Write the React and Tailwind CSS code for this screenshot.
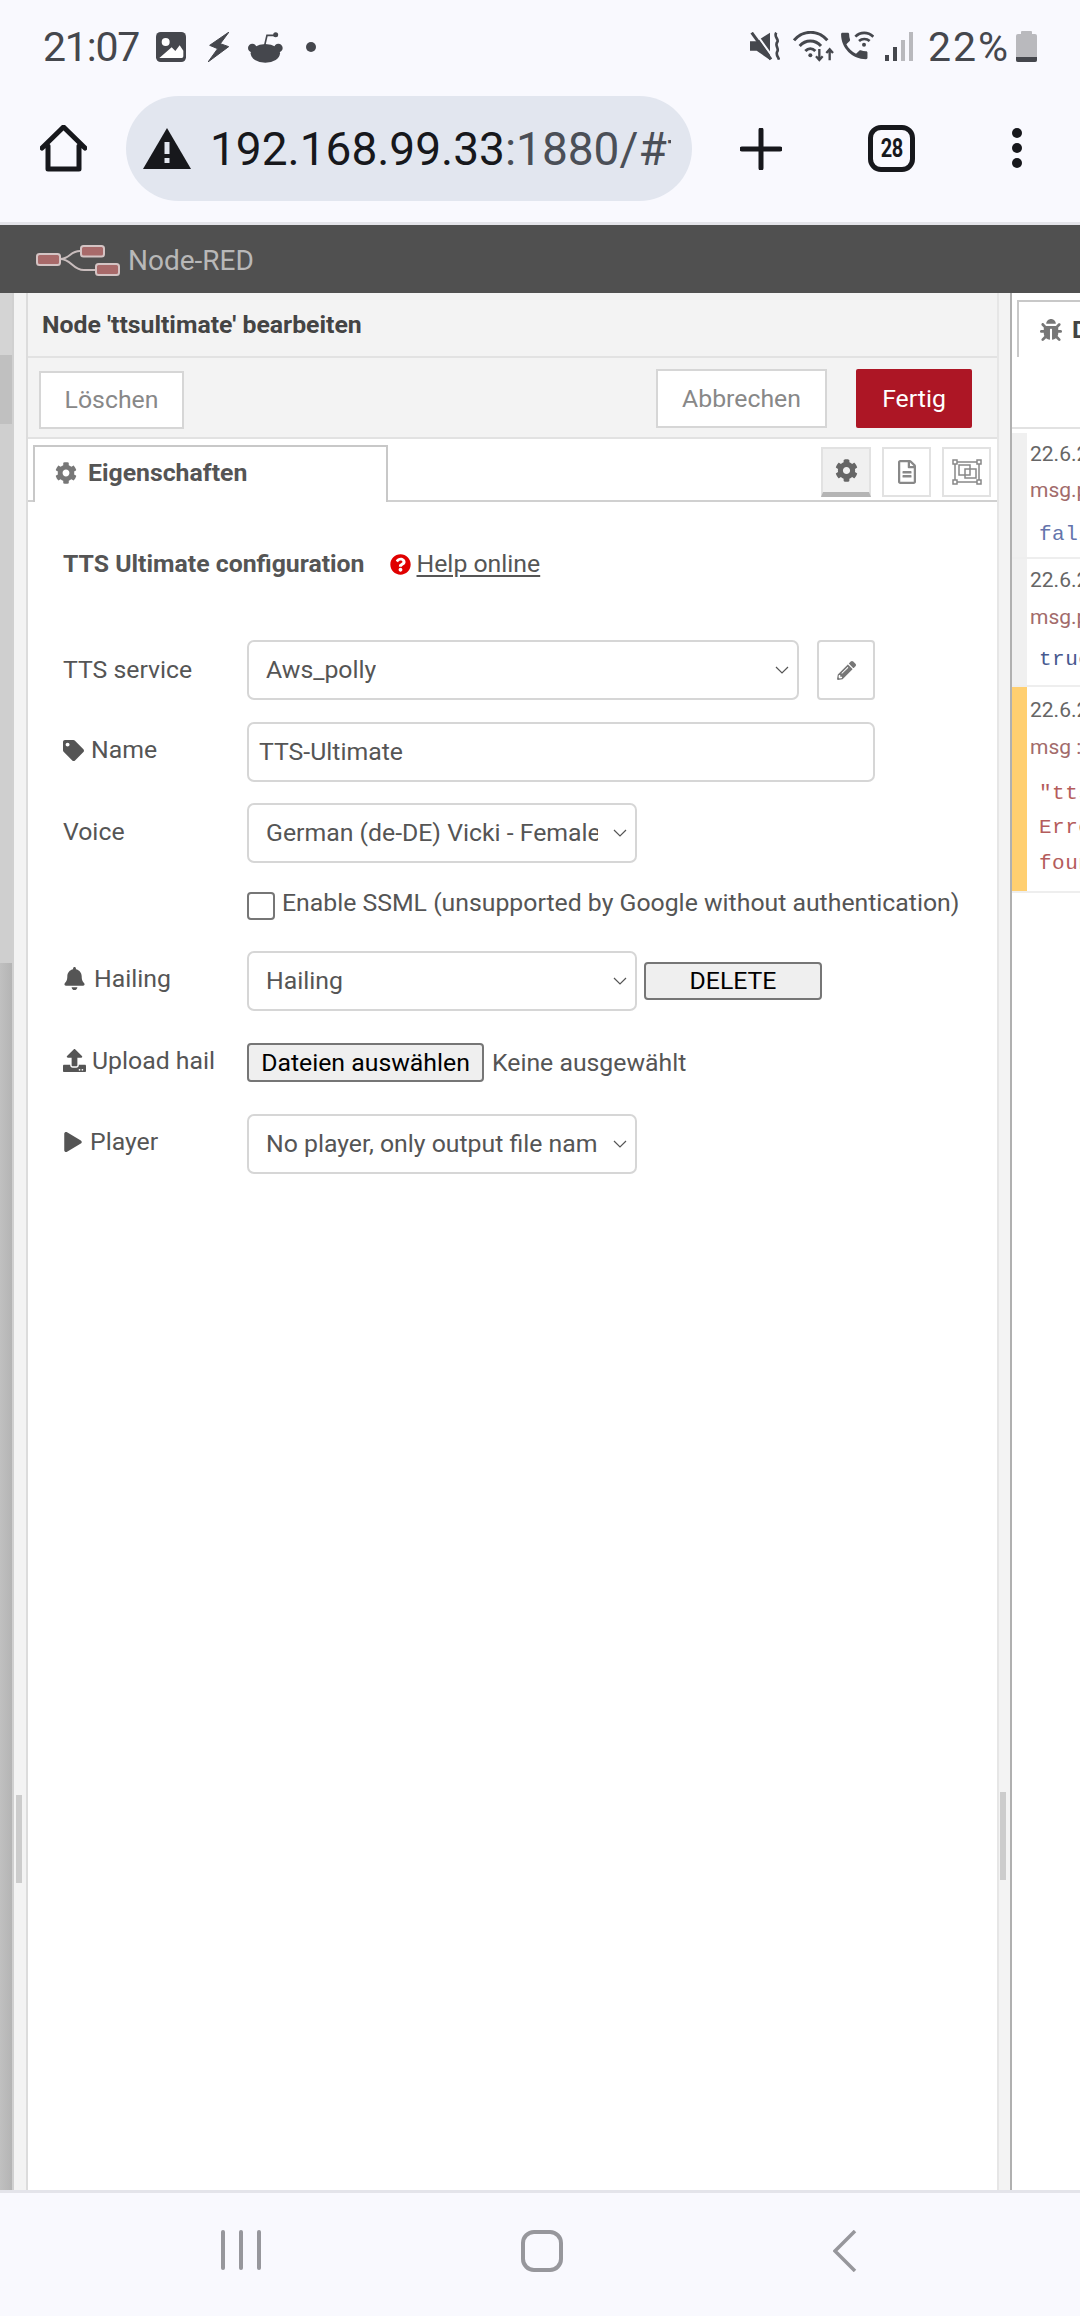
import React from 'react'
import { FaCog, FaTag, FaBell, FaUpload, FaPlay, FaQuestionCircle, FaPencilAlt, FaBug, FaRegFileAlt } from 'react-icons/fa'

function StatusBar() {
  return (
    <div className="flex h-[96px] items-start pl-[43px] pr-[43px] pt-[31px] text-[#45474d]">
      <span className="h-[32px] w-[98px] whitespace-nowrap text-[41px] leading-[32px] tracking-[-1.2px]">21:07</span>
      <svg className="ml-[15px] mt-[1px]" width="30" height="30" viewBox="18 22 90 90">
        <rect x="18" y="22" width="90" height="90" rx="14" fill="#45474d" />
        <circle cx="47" cy="52" r="12" fill="#fff" />
        <path d="M28 100 65 68l11 11 13-17 11 16v17q0 5-5 5H33q-5 0-5-0z" fill="#fff" />
      </svg>
      <svg className="ml-[22px] mt-[1px]" width="21" height="30" viewBox="175 22 63 90">
        <path d="M238 22 180 62l24 10-29 40 62-46-25-9z" fill="#45474d" stroke="#45474d" strokeWidth="3" />
      </svg>
      <svg className="ml-[19px] mt-[1px]" width="35" height="31" viewBox="295 20 105 93">
        <path d="M345 60 352 30h26" fill="none" stroke="#45474d" strokeWidth="5" />
        <circle cx="378" cy="28" r="7.500" fill="#45474d" />
        <circle cx="308" cy="68" r="13" fill="#45474d" />
        <circle cx="386" cy="68" r="13" fill="#45474d" />
        <ellipse cx="347" cy="84" rx="44" ry="28" fill="#45474d" />
      </svg>
      <span className="ml-[23px] mt-[11px] h-[10px] w-[10px] rounded-full bg-[#45474d]" />
      <div className="ml-auto flex items-start">
        <svg className="mt-[1px]" width="30" height="30" viewBox="15 20 90 90">
          <path d="M15 48H35L75 22V104L35 76H15z" fill="#45474d" />
          <path d="M28 18 84 96" stroke="#f9f9fe" strokeWidth="6" />
          <path d="M20 22 78 102" stroke="#45474d" strokeWidth="9" />
          <path d="M94 22c-9 12 9 20 3 28-9 10 6 20 0 28-6 10 3 17 5 25" fill="none" stroke="#45474d" strokeWidth="8" />
        </svg>
        <svg className="ml-[13px]" width="42" height="31" viewBox="145 18 126 93">
          <g fill="none" stroke="#45474d" strokeWidth="9">
            <path d="M148 46c28-32 72-32 100 0" />
            <path d="M165 63c18-20 46-20 64 0" />
            <path d="M182 78c9-9 21-9 30 0" />
            <path d="M224 72v34M214 94l10 11 10-11" strokeWidth="7" />
            <path d="M255 106V72M245 84l10-11 10 11" strokeWidth="7" />
          </g>
          <circle cx="197" cy="91" r="6" fill="#45474d" />
        </svg>
        <svg className="ml-[6px]" width="33" height="30" viewBox="288 20 99 90">
          <path transform="translate(275 12) scale(4.400)" d="M6.600 10.800c1.400 2.800 3.800 5.100 6.600 6.600l2.200-2.200c.3-.3.700-.4 1-.2 1.100.4 2.300.600 3.600.600.600 0 1 .4 1 1V20c0 .600-.4 1-1 1-9.400 0-17-7.600-17-17 0-.600.4-1 1-1h3.500c.600 0 1 .4 1 1 0 1.300.2 2.500.600 3.600.1.300 0 .7-.2 1z" fill="#45474d" />
          <g fill="none" stroke="#45474d" strokeWidth="8">
            <path d="M331 37c15-15 38-15 54 0" />
            <path d="M342 50c9-8 23-8 32 0" />
          </g>
          <circle cx="357" cy="61" r="6" fill="#45474d" />
        </svg>
        <div className="ml-[11px] flex h-[30px] w-[28px] items-end gap-[4px]">
          <span className="h-[6px] w-[4px] bg-[#45474d]" />
          <span className="h-[14px] w-[4px] bg-[#45474d]" />
          <span className="h-[21px] w-[4px] bg-[#b9b9bd]" />
          <span className="h-[29px] w-[4px] bg-[#b9b9bd]" />
        </div>
        <span className="ml-[15px] h-[32px] w-[83px] whitespace-nowrap text-[41px] leading-[32px] tracking-[2px]">22%</span>
        <div className="ml-[5px] flex h-[31px] w-[21px] flex-col items-center">
          <span className="h-[3px] w-[11px] rounded-t-[1px] bg-[#b9b9bd]" />
          <span className="flex h-[28px] w-[21px] flex-col justify-end rounded-[2px] bg-[#b9b9bd]">
            <span className="h-[5px] rounded-b-[2px] bg-[#45474d]" />
          </span>
        </div>
      </div>
    </div>
  )
}

function BrowserBar() {
  return (
    <div className="flex h-[126px] items-start">
      <svg className="ml-[40px] mt-[29px]" width="47" height="47" viewBox="0 0 47 47">
        <path d="M2 23 23.500 2 45 23M8 21v23h31V21" fill="none" stroke="#17181c" strokeWidth="5" strokeLinejoin="round" strokeLinecap="round" />
      </svg>
      <div className="ml-[39px] flex h-[105px] w-[566px] items-center rounded-full bg-[#e2e6ef] pl-[17px]">
        <svg width="48" height="41" viewBox="0 0 48 41">
          <path d="M24 0 48 41H0z" fill="#17181c" />
          <rect x="21.500" y="14" width="5" height="12" fill="#e2e6ef" />
          <rect x="21.500" y="30" width="5" height="5" fill="#e2e6ef" />
        </svg>
        <div className="ml-[19px] w-[461px] overflow-hidden whitespace-nowrap text-[46px] leading-[54px] text-[#4b4f57]">
          <span className="text-[#17181c]">192.168.99.33</span>:1880/#flow/8f2a
        </div>
      </div>
      <svg className="ml-[48px] mt-[32px]" width="42" height="42" viewBox="0 0 42 42">
        <path d="M21 2v38M2 21h38" stroke="#17181c" strokeWidth="5" strokeLinecap="round" />
      </svg>
      <div className="ml-[86px] mt-[29px] flex h-[47px] w-[47px] items-center justify-center rounded-[13px] border-[5px] border-[#17181c] text-[25px] font-bold tracking-[-0.5px] text-[#17181c]">
        <span className="scale-x-[0.8]">28</span>
      </div>
      <div className="ml-[97px] mt-[32px] flex flex-col gap-[5px]">
        <span className="h-[10px] w-[10px] rounded-full bg-[#17181c]" />
        <span className="h-[10px] w-[10px] rounded-full bg-[#17181c]" />
        <span className="h-[10px] w-[10px] rounded-full bg-[#17181c]" />
      </div>
    </div>
  )
}

function NodeRedHeader() {
  return (
    <div className="flex h-[68px] items-center bg-[#505050] pl-[36px]">
      <svg className="mt-[3px]" width="84" height="32" viewBox="0 0 84 32">
        <path d="M24 14C34 14 34 6 44 6M24 14C36 14 36 25 48 25H59" fill="none" stroke="#c9bdbd" strokeWidth="2" />
        <rect x="1" y="9" width="23" height="11" rx="2.500" fill="#a86a6a" stroke="#d4c4c4" strokeWidth="2" />
        <rect x="45" y="1" width="23" height="10.500" rx="2.500" fill="#a86a6a" stroke="#d4c4c4" strokeWidth="2" />
        <rect x="60" y="19" width="23" height="11" rx="2.500" fill="#a86a6a" stroke="#d4c4c4" strokeWidth="2" />
      </svg>
      <span className="ml-[8px] mt-[3px] text-[28px] leading-none text-[#b8b8b8]">Node-RED</span>
    </div>
  )
}

function SelectBox({ width, text, textWidth }) {
  return (
    <div className={`flex h-[60px] items-center rounded-[7px] border-2 border-[#d6d6d6] bg-white pl-[17px] text-[24.800px] text-[#555] ${width}`}>
      <span className={`overflow-hidden whitespace-nowrap ${textWidth}`}>{text}</span>
      <svg className="ml-auto mr-[8px]" width="14" height="8" viewBox="0 0 14 8">
        <path d="M1 1l6 6 6-6" fill="none" stroke="#555" strokeWidth="1.200" />
      </svg>
    </div>
  )
}

function Label({ icon, children, lift }) {
  return (
    <div className={`flex w-[184px] items-center text-[24.800px] leading-[30px] text-[#555] ${lift}`}>
      {icon}
      {children}
    </div>
  )
}

function EditForm() {
  return (
    <div className="flex-1 bg-white pl-[35px]">
      <div className="mt-[47px] flex h-[30px] items-center text-[24.800px] text-[#555]">
        <span className="font-bold">TTS Ultimate configuration</span>
        <FaQuestionCircle className="ml-[25px] text-[#e00000]" size={21} />
        <span className="ml-[6px] underline underline-offset-[3px]">Help online</span>
      </div>

      <div className="mt-[61px] flex items-center">
        <Label>TTS service</Label>
        <SelectBox width="w-[552px]" text="Aws_polly" />
        <div className="ml-[18px] flex h-[60px] w-[58px] items-center justify-center rounded-[4px] border-2 border-[#d6d6d6] bg-white text-[#777]">
          <FaPencilAlt size={19} />
        </div>
      </div>

      <div className="mt-[22px] flex items-center">
        <Label lift="-mt-[4px]" icon={<FaTag className="mr-[7px] text-[#555]" size={21} />}>Name</Label>
        <div className="flex h-[60px] w-[628px] items-center rounded-[7px] border-2 border-[#d6d6d6] bg-white pl-[10px] text-[24.800px] text-[#555]">TTS-Ultimate</div>
      </div>

      <div className="mt-[21px] flex items-center">
        <Label lift="-mt-[3px]">Voice</Label>
        <SelectBox width="w-[390px]" text="German (de-DE) Vicki - Female" textWidth="w-[332px]" />
      </div>

      <div className="ml-[184px] mt-[29px] flex h-[28px] items-center">
        <span className="h-[28px] w-[28px] rounded-[4px] border-2 border-[#767676] bg-white" />
        <span className="-mt-[6px] ml-[7px] whitespace-nowrap text-[24.800px] text-[#555]">Enable SSML (unsupported by Google without authentication)</span>
      </div>

      <div className="mt-[31px] flex items-center">
        <Label lift="-mt-[5px]" icon={<FaBell className="mr-[8px] text-[#555]" size={23} />}>Hailing</Label>
        <SelectBox width="w-[390px]" text="Hailing" />
        <div className="ml-[7px] flex h-[38px] w-[178px] items-center justify-center rounded-[4px] border-2 border-[#767676] bg-[#efefef] text-[24.800px] text-black">DELETE</div>
      </div>

      <div className="mt-[32px] flex items-center">
        <Label lift="-mt-[4px]" icon={<FaUpload className="mr-[6px] text-[#555]" size={23} />}>Upload hail</Label>
        <div className="flex h-[39px] w-[237px] items-center justify-center rounded-[4px] border-2 border-[#767676] bg-[#efefef] text-[24.800px] text-black">Dateien auswählen</div>
        <span className="ml-[8px] text-[24.800px] text-[#555]">Keine ausgewählt</span>
      </div>

      <div className="mt-[32px] flex items-center">
        <Label lift="-mt-[4px]" icon={<FaPlay className="mr-[7px] text-[#555]" size={20} />}>Player</Label>
        <SelectBox width="w-[390px]" text="No player, only output file name" textWidth="w-[332px]" />
      </div>
    </div>
  )
}

function Tray() {
  return (
    <div className="flex flex-1 flex-col border-l-2 border-[#dcdcdc]">
      <div className="flex h-[65px] items-center border-b-2 border-[#e2e2e2] bg-[#f3f3f3] pl-[14px] text-[24.800px] font-bold text-[#444]">Node 'ttsultimate' bearbeiten</div>
      <div className="flex h-[81px] items-start border-b-2 border-[#e2e2e2] bg-[#f3f3f3] pl-[11px] pr-[25px] pt-[11px] text-[24.800px]">
        <div className="mt-[2px] flex h-[58px] w-[145px] items-center justify-center border-2 border-[#d6d6d6] bg-white text-[#888]">Löschen</div>
        <div className="ml-auto flex h-[59px] w-[171px] items-center justify-center border-2 border-[#d6d6d6] bg-white text-[#888]">Abbrechen</div>
        <div className="ml-[29px] flex h-[59px] w-[116px] items-center justify-center rounded-[2px] bg-[#ad1625] text-white">Fertig</div>
      </div>
      <div className="flex h-[63px] items-start border-b-2 border-[#d0d0d0] bg-white pl-[5px]">
        <div className="mt-[6px] flex h-[57px] w-[355px] items-center border-x-2 border-t-2 border-[#c8c8c8] bg-white pb-[3px] pl-[20px] text-[24.800px] font-bold text-[#555]">
          <FaCog className="text-[#777]" size={22} />
          <span className="ml-[11px]">Eigenschaften</span>
        </div>
        <div className="ml-auto mr-[6px] mt-[8px] flex gap-[11px]">
          <div className="flex h-[50px] w-[50px] flex-col items-center justify-center border-2 border-b-[5px] border-[#e2e2e2] border-b-[#b4b4b4] bg-[#f0f0f0] text-[#666]">
            <FaCog size={23} />
          </div>
          <div className="flex h-[50px] w-[49px] items-center justify-center border-2 border-[#e2e2e2] bg-white text-[#888]">
            <FaRegFileAlt size={24} />
          </div>
          <div className="flex h-[50px] w-[49px] items-center justify-center border-2 border-[#e2e2e2] bg-white">
            <svg width="30" height="26" viewBox="0 0 30 26" fill="none" stroke="#888" strokeWidth="1.500">
              <rect x="3" y="3" width="24" height="20" />
              <rect x="1" y="1" width="4" height="4" fill="#fff" />
              <rect x="25" y="1" width="4" height="4" fill="#fff" />
              <rect x="1" y="21" width="4" height="4" fill="#fff" />
              <rect x="25" y="21" width="4" height="4" fill="#fff" />
              <rect x="7" y="6" width="11" height="10" />
              <rect x="13" y="10" width="11" height="9" />
            </svg>
          </div>
        </div>
      </div>
      <EditForm />
    </div>
  )
}

function DebugRow({ strip, height, children }) {
  return (
    <div className={`flex border-b-2 border-[#eeeeee] ${height}`}>
      <div className={`w-[15px] shrink-0 ${strip}`} />
      <div className="whitespace-nowrap pl-[3px]">{children}</div>
    </div>
  )
}

function Meta({ top, children, color }) {
  return <div className={`text-[21px] leading-[24px] ${top} ${color}`}>{children}</div>
}

function Mono({ top, children, color }) {
  return <div className={`ml-[9px] font-['Liberation_Mono',monospace] text-[21px] leading-[24px] tracking-[0.5px] ${top} ${color}`}>{children}</div>
}

function Sidebar() {
  return (
    <div className="w-[70px] overflow-hidden border-l-2 border-[#b0b0b0] bg-white">
      <div className="h-[136px] border-b-2 border-[#e2e2e2] pt-[7px]">
        <div className="ml-[5px] flex h-[57px] w-[100px] items-center border-l-2 border-t-2 border-[#c8c8c8] pl-[21px] text-[24.800px] font-bold text-[#444]">
          <FaBug className="shrink-0 text-[#777]" size={22} />
          <span className="ml-[10px]">Debug</span>
        </div>
      </div>
      <div className="h-[4px]" />
      <DebugRow strip="bg-[#f0f0f0]" height="h-[126px]">
        <Meta top="mt-[9px]" color="text-[#666]">22.6.2022</Meta>
        <Meta top="mt-[12px]" color="text-[#a26b6b]">msg.payload</Meta>
        <Mono top="mt-[21px]" color="text-[#6474ac]">false</Mono>
      </DebugRow>
      <DebugRow strip="bg-[#f0f0f0]" height="h-[128px]">
        <Meta top="mt-[9px]" color="text-[#666]">22.6.2022</Meta>
        <Meta top="mt-[13px]" color="text-[#a26b6b]">msg.payload</Meta>
        <Mono top="mt-[19px]" color="text-[#47598f]">true</Mono>
      </DebugRow>
      <DebugRow strip="bg-[#ffcf70]" height="h-[206px]">
        <Meta top="mt-[11px]" color="text-[#666]">22.6.2022</Meta>
        <Meta top="mt-[13px]" color="text-[#a26b6b]">msg : error</Meta>
        <Mono top="mt-[23px]" color="text-[#b45c5c]">"ttsultimate</Mono>
        <Mono top="mt-[10px]" color="text-[#b45c5c]">Error not</Mono>
        <Mono top="mt-[12px]" color="text-[#b45c5c]">found</Mono>
      </DebugRow>
    </div>
  )
}

function NavBar() {
  return (
    <div className="flex h-[123px] items-start bg-[#f9f9fe] pt-[37px]">
      <div className="ml-[221px] flex h-[40px] gap-[14px]">
        <span className="h-[40px] w-[4px] rounded-full bg-[#97979c]" />
        <span className="h-[40px] w-[4px] rounded-full bg-[#97979c]" />
        <span className="h-[40px] w-[4px] rounded-full bg-[#97979c]" />
      </div>
      <span className="ml-[260px] h-[42px] w-[42px] rounded-[13px] border-[4px] border-[#97979c]" />
      <svg className="ml-[270px]" width="24" height="42" viewBox="0 0 24 42">
        <path d="M22 1 2 21l20 20" fill="none" stroke="#97979c" strokeWidth="3.500" />
      </svg>
    </div>
  )
}

export default function App() {
  return (
    <div className="flex h-[2316px] w-[1080px] flex-col overflow-hidden bg-[#f9f9fe] font-[Roboto,sans-serif]">
      <StatusBar />
      <BrowserBar />
      <div className="h-[3px] bg-[#e4e4ea]" />
      <NodeRedHeader />
      <div className="flex h-[1897px]">
        <div className="flex w-[12px] flex-col">
          <div className="h-[62px] bg-[#d4d4d4]" />
          <div className="h-[69px] bg-[#c0c0c0]" />
          <div className="h-[539px] bg-[#cfcfcf]" />
          <div className="flex-1 bg-gradient-to-r from-[#c0c0c0] to-[#b4b4b4]" />
        </div>
        <div className="w-[14px] border-l-2 border-[#d0d0d0] bg-[#f3f3f3] pl-[2px] pt-[1502px]">
          <div className="h-[88px] w-[6px] bg-[#cccccc]" />
        </div>
        <Tray />
        <div className="w-[13px] border-l-2 border-[#e6e6e6] bg-[#f3f3f3] pl-[1px] pt-[1499px]">
          <div className="h-[88px] w-[6px] bg-[#cccccc]" />
        </div>
        <Sidebar />
      </div>
      <div className="h-[3px] bg-[#e4e4ea]" />
      <NavBar />
    </div>
  )
}
